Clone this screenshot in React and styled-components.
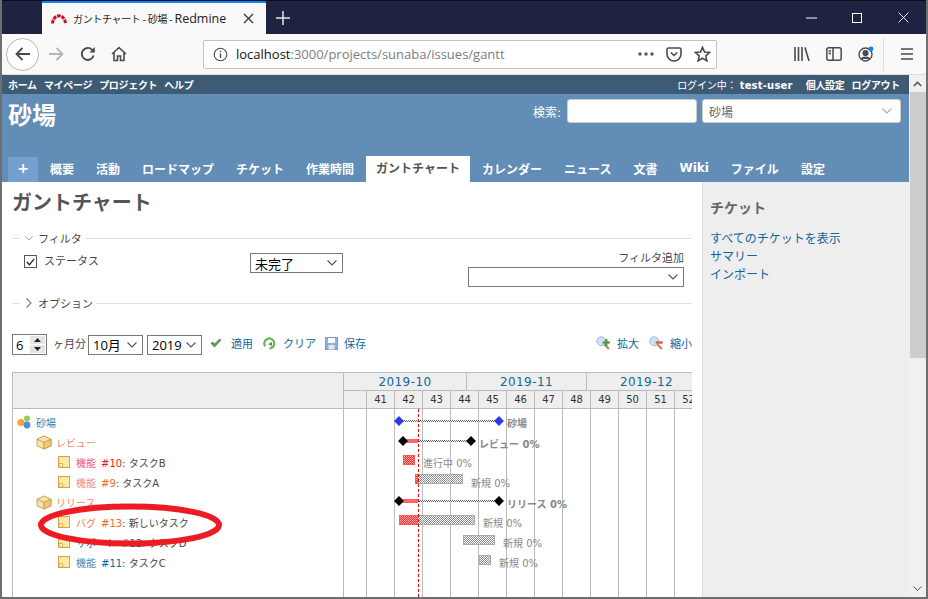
import styled, { createGlobalStyle } from "styled-components";

const GlobalStyle = createGlobalStyle`
  html, body {
    margin: 0;
    padding: 0;
    overflow: hidden;
    background: #fff;
  }
  * {
    box-sizing: border-box;
  }
  svg {
    flex: none;
  }
`;

const pageFont = `"DejaVu Sans", "Noto Sans CJK JP", sans-serif`;
const uiFont = `"Open Sans", "Noto Sans CJK JP", sans-serif`;

const Window = styled.div`
  position: relative;
  width: 928px;
  height: 599px;
  display: flex;
  flex-direction: column;
  overflow: hidden;
  border-left: 2px solid #6f6f6f;
  border-right: 2px solid #6f6f6f;
  border-bottom: 2px solid #6f6f6f;
  font-family: ${pageFont};
`;

/* browser chrome */
const TitleBar = styled.div`
  height: 34px;
  flex: none;
  display: flex;
  align-items: stretch;
  padding-left: 40px;
  background: #1f2342;
  border-top: 1px solid #0c0c14;
`;

const BrowserTab = styled.div`
  width: 224px;
  display: flex;
  align-items: center;
  gap: 6px;
  padding: 0 12px 0 9px;
  background: #f9f9fa;
  border-top: 2px solid #0a84ff;
  font: 10px ${uiFont};
  color: #1c1c1c;
`;

const TabTitle = styled.span`
  flex: 1;
  white-space: nowrap;
  letter-spacing: -0.35px;
  b {
    font-weight: 400;
    font-size: 12.5px;
    letter-spacing: 0;
  }
`;

const NewTab = styled.div`
  width: 34px;
  display: flex;
  align-items: center;
  justify-content: center;
`;

const WindowControls = styled.div`
  margin-left: auto;
  display: flex;
  align-items: center;
`;

const WindowButton = styled.div`
  width: 46px;
  display: flex;
  justify-content: center;
`;

const Toolbar = styled.div`
  height: 41px;
  flex: none;
  display: flex;
  align-items: center;
  background: #f9f9fa;
  border-bottom: 1px solid #dcdcdc;
`;

const ToolButton = styled.div`
  width: ${(props) => props.$w || 32}px;
  height: 32px;
  margin-left: ${(props) => props.$left || 0}px;
  flex: none;
  display: flex;
  align-items: center;
  justify-content: center;
`;

const BackButton = styled.div`
  width: 33px;
  height: 33px;
  margin: 0 1px 0 4px;
  flex: none;
  display: flex;
  align-items: center;
  justify-content: center;
  background: #fff;
  border: 1px solid #b5b5b5;
  border-radius: 50%;
`;

const UrlBar = styled.div`
  width: 514px;
  height: 29px;
  margin-left: 68px;
  display: flex;
  align-items: center;
  padding: 0 0 0 9px;
  background: #fff;
  border: 1px solid #c2c2c2;
  border-radius: 2px;
  flex: none;
  font: 13px ${uiFont};
`;

const UrlText = styled.span`
  flex: 1;
  margin-left: 8px;
  color: #7d7d7d;
  white-space: nowrap;
  b {
    font-weight: 400;
    color: #111;
  }
`;

const ToolDivider = styled.div`
  width: 1px;
  height: 33px;
  background: #dedede;
  margin: 0 7px 0 1px;
`;

/* redmine page */
const Viewport = styled.div`
  flex: 1;
  min-height: 0;
  display: flex;
  overflow: hidden;
`;

const Page = styled.div`
  flex: 1;
  min-width: 0;
  display: flex;
  flex-direction: column;
`;

const TopMenu = styled.div`
  height: 19px;
  flex: none;
  display: flex;
  align-items: center;
  justify-content: space-between;
  padding: 0 9px 0 6px;
  background: #3e5b76;
  color: #fff;
  font-size: 10px;
`;

const MenuGroup = styled.div`
  display: flex;
  gap: 7px;
  align-items: center;
`;

const MenuLink = styled.span`
  font-weight: bold;
  white-space: nowrap;
  letter-spacing: -0.3px;
`;

const LoggedAs = styled.span`
  margin-right: 6px;
  white-space: nowrap;
  letter-spacing: -0.1px;
  b {
    font-size: 10px;
    letter-spacing: 0.2px;
  }
`;

const Header = styled.div`
  height: 88px;
  flex: none;
  display: flex;
  flex-direction: column;
  justify-content: space-between;
  background: #628db6;
  color: #fff;
`;

const HeaderTop = styled.div`
  display: flex;
  align-items: flex-start;
  justify-content: space-between;
  padding: 5px 8px 0 6px;
`;

const ProjectName = styled.h1`
  margin: 0;
  font-size: 24px;
  line-height: 34px;
  font-weight: bold;
`;

const SearchArea = styled.div`
  display: flex;
  align-items: center;
  font-size: 12px;
`;

const SearchInput = styled.input`
  width: 130px;
  height: 24px;
  margin: 0 5px 0 6px;
  background: #fff;
  border: 1px solid #ccc;
  border-radius: 3px;
`;

const JumpBox = styled.div`
  width: 199px;
  height: 24px;
  display: flex;
  align-items: center;
  justify-content: space-between;
  padding: 0 8px 0 6px;
  background: #fff;
  border: 1px solid #ccc;
  border-radius: 3px;
  color: #666;
`;

const TabBar = styled.div`
  display: flex;
  align-items: flex-end;
  gap: 2px;
  padding-left: 6px;
`;

const MainTab = styled.div`
  height: ${(props) => (props.$active ? 26 : 25)}px;
  padding: 0 10px 3px;
  display: flex;
  align-items: center;
  font-size: 12px;
  font-weight: bold;
  white-space: nowrap;
  background: ${(props) => (props.$active ? "#fff" : "transparent")};
  color: ${(props) => (props.$active ? "#555" : "#fff")};
`;

const NewObjectTab = styled(MainTab)`
  width: 30px;
  justify-content: center;
  background: #759fcf;
  font-size: 14px;
`;

const Main = styled.div`
  flex: 1;
  min-height: 0;
  display: flex;
`;

const Content = styled.div`
  width: 700px;
  flex: none;
  padding: 0 10px;
  background: #fff;
  color: #484848;
  font-size: 11px;
`;

const Sidebar = styled.div`
  flex: 1;
  padding: 15px 7px;
  background: #eee;
  border-left: 1px solid #ddd;
`;

const SidebarTitle = styled.h3`
  margin: 0 0 11px;
  font-size: 14px;
  line-height: 22px;
  color: #666;
  font-weight: bold;
`;

const SidebarLink = styled.div`
  font-size: 12px;
  line-height: 18px;
  color: #169;
`;

const Scrollbar = styled.div`
  width: 17px;
  flex: none;
  display: flex;
  flex-direction: column;
  background: #f0f0f0;
`;

const ScrollArrow = styled.div`
  height: 17px;
  flex: none;
  display: flex;
  align-items: center;
  justify-content: center;
`;

const ScrollTrack = styled.div`
  flex: 1;
`;

const ScrollThumb = styled.div`
  height: 266px;
  margin-left: 1px;
  background: #cdcdcd;
`;

const PageTitle = styled.h2`
  margin: 0;
  height: 42px;
  font-size: 20px;
  line-height: 42px;
  font-weight: bold;
  color: #555;
`;

const Legend = styled.div`
  height: 20px;
  display: flex;
  align-items: center;
  gap: 5px;
  margin-top: ${(props) => props.$top || 0}px;
  font-size: 11px;
  white-space: nowrap;
  &::before {
    content: "";
    width: 8px;
    height: 1px;
    background: #e0e0e0;
  }
  &::after {
    content: "";
    flex: 1;
    height: 1px;
    background: #e0e0e0;
    margin-left: -2px;
  }
`;

const FilterBody = styled.div`
  height: 45px;
  display: grid;
  grid-template-columns: 226px 1fr 216px;
  padding: 5px 8px 0 12px;
`;

const StatusField = styled.div`
  display: flex;
  gap: 7px;
  margin-top: -1px;
`;

const CheckBox = styled.div`
  width: 13px;
  height: 13px;
  margin-top: 3px;
  display: flex;
  align-items: center;
  justify-content: center;
  background: #fff;
  border: 1px solid #555;
`;

const SelectBox = styled.div`
  width: ${(props) => props.$w}px;
  height: 20px;
  margin-top: ${(props) => props.$top || 0}px;
  margin-left: ${(props) => props.$left || 0}px;
  flex: none;
  display: flex;
  align-items: center;
  justify-content: space-between;
  padding: 0 5px 0 4px;
  background: #fff;
  border: 1px solid #767676;
  color: #000;
  font: 13px ${uiFont};
`;

const AddFilter = styled.div`
  display: flex;
  flex-direction: column;
  align-items: flex-end;
  margin-top: -2px;
  line-height: 15px;
`;

const Controls = styled.div`
  height: 21px;
  margin-top: 21px;
  display: flex;
  align-items: center;
`;

const MonthSpinner = styled.div`
  width: 35px;
  height: 21px;
  display: flex;
  align-items: center;
  justify-content: space-between;
  padding: 1px 1px 1px 3px;
  border: 1px solid #767676;
  font: 13px ${uiFont};
  color: #000;
`;

const SpinButtons = styled.div`
  width: 15px;
  height: 17px;
  display: flex;
  flex-direction: column;
  gap: 1px;
`;

const SpinPart = styled.div`
  flex: 1;
  display: flex;
  align-items: center;
  justify-content: center;
  background: #e4e4e4;
`;

const ControlLabel = styled.span`
  margin: 0 2px 3px 6px;
  white-space: nowrap;
`;

const ActionLink = styled.span`
  display: flex;
  align-items: center;
  gap: ${(props) => props.$gap || 7}px;
  margin-left: ${(props) => props.$left || 0}px;
  padding-bottom: 3px;
  color: #169;
  white-space: nowrap;
`;

const Spacer = styled.div`
  flex: 1;
`;

const GanttTable = styled.div`
  margin-top: 17px;
  display: flex;
  height: 300px;
`;

const SubjectColumn = styled.div`
  width: 331px;
  flex: none;
  border-top: 1px solid #bbb;
  border-left: 1px solid #bbb;
`;

const SubjectHead = styled.div`
  height: 36px;
  background: #eee;
  border-bottom: 1px solid #bbb;
`;

const SubjectList = styled.div`
  padding-top: 3px;
`;

const SubjectRow = styled.div`
  height: 20px;
  display: flex;
  align-items: center;
  gap: ${(props) => (props.$depth === 2 ? 6 : 4)}px;
  padding-left: ${(props) => [4, 23, 45][props.$depth]}px;
  font-size: 10px;
  white-space: nowrap;
  color: #484848;
`;

const SubjectLink = styled.span`
  color: ${(props) => props.$color};
`;

const IssueNumber = styled.span`
  margin-left: 5px;
  color: ${(props) => props.$color};
`;

const ChartColumn = styled.div`
  width: 349px;
  flex: none;
  overflow: hidden;
  border-top: 1px solid #bbb;
  border-left: 1px solid #bbb;
`;

const MonthRow = styled.div`
  height: 18px;
  display: flex;
  background: #eee;
  border-bottom: 1px solid #bbb;
`;

const MonthCell = styled.div`
  width: ${(props) => props.$w}px;
  flex: none;
  display: flex;
  align-items: center;
  justify-content: center;
  font-size: 12px;
  letter-spacing: 0.4px;
  color: #169;
  border-right: 1px solid #bbb;
`;

const WeekRow = styled.div`
  height: 18px;
  width: 400px;
  display: flex;
  background: #eee;
  border-bottom: 1px solid #bbb;
`;

const WeekCell = styled.div`
  width: ${(props) => props.$w}px;
  flex: none;
  padding-top: 1px;
  text-align: center;
  font-size: 10px;
  line-height: 16px;
  color: #333;
  border-right: 1px solid #bbb;
`;

const Canvas = styled.div`
  position: relative;
  width: 400px;
  height: 200px;
  display: flex;
`;

const GridLine = styled.div`
  width: ${(props) => props.$w}px;
  flex: none;
  border-right: 1px solid #bbb;
`;

const TodayLine = styled.div`
  position: absolute;
  top: 0;
  bottom: 0;
  left: 74px;
  width: 1px;
  background: repeating-linear-gradient(#f00 0 3px, transparent 3px 5px);
`;

const BarTrack = styled.div`
  position: absolute;
  height: 10px;
  border: 1px solid #aaa;
  background: repeating-conic-gradient(#8c8c8c 0 25%, #fff 0 50%) 0 0 / 2px 2px;
`;

const BarDone = styled.div`
  position: absolute;
  top: -1px;
  bottom: -1px;
  left: -1px;
  z-index: 1;
  border: 1px solid #f55;
  background: repeating-conic-gradient(#f22 0 25%, #ffb4b4 0 50%) 0 0 / 2px 2px;
`;

const MilestoneLine = styled.div`
  position: absolute;
  height: 2px;
  background: repeating-conic-gradient(#666 0 25%, #fff 0 50%) 0 0 / 2px 2px;
`;

const MilestoneDone = styled.div`
  position: absolute;
  top: -1px;
  height: 4px;
  left: 0;
  background: #f66;
`;

const Diamond = styled.div`
  position: absolute;
  width: 7px;
  height: 7px;
  transform: translate(-50%, -50%) rotate(45deg);
  background: ${(props) => props.$color};
`;

const BarLabel = styled.span`
  position: absolute;
  font-size: 10px;
  line-height: 14px;
  white-space: nowrap;
  color: #888;
  font-weight: ${(props) => (props.$bold ? "bold" : "normal")};
`;

const CircleMark = styled.svg`
  position: absolute;
  left: 34px;
  top: 502px;
`;

function ChevronDown({ size = 10, color = "#555" }) {
  return (
    <svg width={size} height={size * 0.6} viewBox="0 0 10 6" fill="none" stroke={color} strokeWidth="1.1">
      <path d="M0.5 0.5 5 5 9.5 0.5" />
    </svg>
  );
}

function Favicon() {
  return (
    <svg width="16" height="10" viewBox="0 0 16 10" fill="none" stroke="#c4161c" strokeWidth="3">
      <path d="M1.5 9.5C1.8 5 4.5 2 8 1.8c3.5.2 6.2 3.2 6.5 7.7" strokeDasharray="3.6 .9" />
    </svg>
  );
}

function ProjectIcon() {
  return (
    <svg width="15" height="14" viewBox="0 0 15 14">
      <circle cx="10" cy="3.5" r="3" fill="#8fd14f" />
      <circle cx="4" cy="7.5" r="3.6" fill="#f5a33b" />
      <circle cx="10" cy="10" r="3.4" fill="#4a8fe0" />
    </svg>
  );
}

function PackageIcon() {
  return (
    <svg width="16" height="15" viewBox="0 0 16 15" stroke="#c9a35c" strokeWidth="1">
      <path d="M8 1 15 4.2v6.6L8 14 1 10.8V4.2Z" fill="#f9e2ad" />
      <path d="M1 4.2 8 7.4 15 4.2M8 7.4V14" fill="none" />
      <path d="M8 7.4 15 4.2v6.6L8 14Z" fill="#f0c873" />
    </svg>
  );
}

function IssueIcon() {
  return (
    <svg width="12" height="12" viewBox="0 0 12 12">
      <rect x=".5" y=".5" width="11" height="11" fill="#fbe9a8" stroke="#e0a040" />
      <path d="M1 11V7.5h3.5V11Z" fill="#fff6d8" stroke="#e0a040" strokeWidth=".8" />
    </svg>
  );
}

function ApplyIcon() {
  return (
    <svg width="12" height="10" viewBox="0 0 12 10">
      <path d="M.5 5.5 2.8 3.6 4.6 5.6 9.6.4 11.5 2 4.6 9.5Z" fill="#5c9b57" />
    </svg>
  );
}

function ClearIcon() {
  return (
    <svg width="13" height="13" viewBox="0 0 13 13" fill="none">
      <path d="M2.2 9.4A5 5 0 1 1 6.5 11.5" stroke="#6cb35a" strokeWidth="2.2" />
      <path d="M5 7.2 8.8 4.8 9.2 9Z" fill="#4f9a48" />
    </svg>
  );
}

function SaveIcon() {
  return (
    <svg width="13" height="13" viewBox="0 0 13 13">
      <rect x=".5" y=".5" width="12" height="12" fill="#8fb0dc" stroke="#7a9bc9" />
      <rect x="3" y="1" width="7" height="5" fill="#fff" />
      <rect x="3.5" y="8" width="6" height="4.5" fill="#dfe7f2" />
    </svg>
  );
}

function ZoomIcon({ sign }) {
  const fill = sign === "plus" ? "#4f9a48" : "#e0525a";
  return (
    <svg width="14" height="14" viewBox="0 0 14 14">
      <path d="M8 8 13 13" stroke="#b98a56" strokeWidth="2.2" />
      <circle cx="5.2" cy="5.2" r="4.4" fill="#cfe0f5" stroke="#9db9dc" />
      {sign === "plus" && <rect x="9" y="3" width="2.4" height="7" fill={fill} />}
      <rect x="6.7" y="5.3" width="7" height="2.4" fill={fill} />
    </svg>
  );
}

const months = [
  { label: "2019-10", w: 123 },
  { label: "2019-11", w: 120 },
  { label: "2019-12", w: 120 },
];

// first cell is the tail of week 40
const weeks = ["", "41", "42", "43", "44", "45", "46", "47", "48", "49", "50", "51", "52"];

const TODAY = 74;

const tasks = [
  { left: 59, top: 46, width: 12, label: "進行中 0%", labelX: 79, labelY: 48 },
  { left: 71, top: 65, width: 48, label: "新規 0%", labelX: 127, labelY: 68 },
  { left: 55, top: 106, width: 76, label: "新規 0%", labelX: 139, labelY: 108 },
  { left: 119, top: 126, width: 32, label: "新規 0%", labelX: 159, labelY: 128 },
  { left: 135, top: 146, width: 12, label: "新規 0%", labelX: 155, labelY: 148 },
];

const milestones = [
  { from: 55, to: 155, y: 12, color: "#2d3be8", label: "砂場", labelX: 163, labelY: 8, done: false },
  { from: 59, to: 127, y: 32, color: "#000", label: "レビュー 0%", labelX: 135, labelY: 29, done: true },
  { from: 55, to: 155, y: 92, color: "#000", label: "リリース 0%", labelX: 163, labelY: 89, done: true },
];

const subjects = [
  { depth: 2, tracker: "機能", trackerColor: "#f4566f", number: "#10", numberColor: "#f01818", title: "タスクB" },
  { depth: 2, tracker: "機能", trackerColor: "#f58a7a", number: "#9", numberColor: "#f56a1a", title: "タスクA" },
];

const lateSubjects = [
  { depth: 2, tracker: "バグ", trackerColor: "#f5803f", number: "#13", numberColor: "#f56a1a", title: "新しいタスク" },
  { depth: 2, tracker: "サポート", trackerColor: "#169", number: "#12", numberColor: "#169", title: "タスクD" },
  { depth: 2, tracker: "機能", trackerColor: "#4f86b0", number: "#11", numberColor: "#169", title: "タスクC" },
];

function IssueRow({ issue }) {
  return (
    <SubjectRow $depth={issue.depth}>
      <IssueIcon />
      <span>
        <SubjectLink $color={issue.trackerColor}>{issue.tracker}</SubjectLink>
        <IssueNumber $color={issue.numberColor}>{issue.number}</IssueNumber>: {issue.title}
      </span>
    </SubjectRow>
  );
}

function BrowserChrome() {
  return (
    <>
      <TitleBar>
        <BrowserTab>
          <Favicon />
          <TabTitle>ガントチャート - 砂場 - <b>Redmine</b></TabTitle>
          <svg width="11" height="11" viewBox="0 0 11 11" stroke="#3a3a3a" strokeWidth="1.4">
            <path d="M1 1 10 10M10 1 1 10" />
          </svg>
        </BrowserTab>
        <NewTab>
          <svg width="14" height="14" viewBox="0 0 14 14" stroke="#e6e6ea" strokeWidth="1.5">
            <path d="M7 0V14M0 7H14" />
          </svg>
        </NewTab>
        <WindowControls>
          <WindowButton>
            <svg width="11" height="2" viewBox="0 0 11 2" stroke="#fff"><path d="M0 1H11" /></svg>
          </WindowButton>
          <WindowButton>
            <svg width="10" height="10" viewBox="0 0 10 10" stroke="#fff" fill="none"><rect x=".5" y=".5" width="9" height="9" /></svg>
          </WindowButton>
          <WindowButton>
            <svg width="11" height="11" viewBox="0 0 11 11" stroke="#fff" strokeWidth=".9"><path d="M.5.5 10.5 10.5M10.5.5 .5 10.5" /></svg>
          </WindowButton>
        </WindowControls>
      </TitleBar>
      <Toolbar>
        <BackButton>
          <svg width="16" height="14" viewBox="0 0 16 14" fill="none" stroke="#4a4a4f" strokeWidth="1.8">
            <path d="M15 7H2M7.5 1 1.5 7l6 6" />
          </svg>
        </BackButton>
        <ToolButton $w={32}>
          <svg width="16" height="14" viewBox="0 0 16 14" fill="none" stroke="#b4b4b6" strokeWidth="1.8">
            <path d="M1 7H14M8.5 1l6 6-6 6" />
          </svg>
        </ToolButton>
        <ToolButton $w={31}>
          <svg width="16" height="16" viewBox="0 0 16 16" fill="none" stroke="#4a4a4f" strokeWidth="1.9">
            <path d="M13.6 9.5A6 6 0 1 1 12 3.6L14 5.5" />
            <path d="M14.8 1v5.4H9.4" fill="#4a4a4f" stroke="none" />
          </svg>
        </ToolButton>
        <ToolButton $w={32}>
          <svg width="16" height="16" viewBox="0 0 16 16" fill="none" stroke="#4a4a4f" strokeWidth="1.6">
            <path d="M1 8 8 1.5 15 8M3 6.5V14.5H6.5V10h3v4.5H13V6.5" />
          </svg>
        </ToolButton>
        <UrlBar>
          <svg width="15" height="15" viewBox="0 0 15 15" fill="none" stroke="#4a4a4f" strokeWidth="1.1">
            <circle cx="7.5" cy="7.5" r="6.3" />
            <path d="M7.5 6.6V11M7.5 3.8V5.2" strokeWidth="1.4" />
          </svg>
          <UrlText><b>localhost</b>:3000/projects/sunaba/issues/gantt</UrlText>
          <ToolButton $w={28}>
            <svg width="16" height="4" viewBox="0 0 16 4" fill="#555"><circle cx="2" cy="2" r="1.7" /><circle cx="8" cy="2" r="1.7" /><circle cx="14" cy="2" r="1.7" /></svg>
          </ToolButton>
          <ToolButton $w={28}>
            <svg width="16" height="15" viewBox="0 0 16 15" fill="none" stroke="#4a4a4f" strokeWidth="1.6">
              <path d="M1 2.5Q1 1 2.5 1h11Q15 1 15 2.5V7A7 7 0 0 1 1 7Z" />
              <path d="M4.8 5.5 8 8.5l3.2-3" />
            </svg>
          </ToolButton>
          <ToolButton $w={28}>
            <svg width="17" height="16" viewBox="0 0 17 16" fill="none" stroke="#4a4a4f" strokeWidth="1.6">
              <path d="M8.5 1.3 10.6 6l5 .5-3.8 3.3 1.1 5-4.4-2.6-4.4 2.6 1.1-5L1.4 6.5l5-.5Z" />
            </svg>
          </ToolButton>
        </UrlBar>
        <ToolButton $w={32} $left={69}>
          <svg width="16" height="14" viewBox="0 0 16 14" fill="none" stroke="#4a4a4f" strokeWidth="1.6">
            <path d="M1 0V14M4.5 0V14M8 0V14M11 .5 15 14" />
          </svg>
        </ToolButton>
        <ToolButton $w={32}>
          <svg width="16" height="14" viewBox="0 0 16 14" fill="none" stroke="#4a4a4f" strokeWidth="1.5">
            <rect x=".8" y=".8" width="14.4" height="12.4" rx="2" />
            <path d="M7 1V13M2.5 4H5M2.5 6.5H5" />
          </svg>
        </ToolButton>
        <ToolButton $w={32}>
          <svg width="16" height="16" viewBox="0 0 16 16" fill="none" stroke="#4a4a4f" strokeWidth="1.4">
            <circle cx="7.5" cy="8.5" r="6.5" />
            <circle cx="7.5" cy="7" r="2.4" fill="#4a4a4f" />
            <path d="M3.5 13c1-2.5 7-2.5 8 0" fill="#4a4a4f" />
            <circle cx="13" cy="3" r="2.4" fill="#0a84ff" stroke="none" />
          </svg>
        </ToolButton>
        <ToolDivider />
        <ToolButton $w={32}>
          <svg width="14" height="12" viewBox="0 0 14 12" stroke="#4a4a4f" strokeWidth="1.6">
            <path d="M1 1H13M1 6H13M1 11H13" />
          </svg>
        </ToolButton>
      </Toolbar>
    </>
  );
}

function GanttChart() {
  return (
    <ChartColumn>
      <MonthRow>
        {months.map((month) => (
          <MonthCell key={month.label} $w={month.w}>{month.label}</MonthCell>
        ))}
      </MonthRow>
      <WeekRow>
        {weeks.map((week, i) => (
          <WeekCell key={i} $w={i === 0 ? 23 : 28}>{week}</WeekCell>
        ))}
      </WeekRow>
      <Canvas>
        {weeks.map((week, i) => (
          <GridLine key={i} $w={i === 0 ? 23 : 28} />
        ))}
        {milestones.map((m) => (
          <div key={m.label}>
            <MilestoneLine style={{ left: m.from, top: m.y - 1, width: m.to - m.from }}>
              {m.done && <MilestoneDone style={{ width: TODAY - m.from }} />}
            </MilestoneLine>
            <Diamond $color={m.color} style={{ left: m.from, top: m.y }} />
            <Diamond $color={m.color} style={{ left: m.to, top: m.y }} />
            <BarLabel $bold style={{ left: m.labelX, top: m.labelY }}>{m.label}</BarLabel>
          </div>
        ))}
        {tasks.map((t) => (
          <div key={t.left}>
            <BarTrack style={{ left: t.left, top: t.top, width: t.width }}>
              {t.left < TODAY && <BarDone style={{ width: Math.min(TODAY - t.left, t.width) }} />}
            </BarTrack>
            <BarLabel style={{ left: t.labelX, top: t.labelY }}>{t.label}</BarLabel>
          </div>
        ))}
        <TodayLine />
      </Canvas>
    </ChartColumn>
  );
}

export default function App() {
  return (
    <>
      <GlobalStyle />
      <Window>
        <BrowserChrome />
        <Viewport>
          <Page>
            <TopMenu>
              <MenuGroup>
                <MenuLink>ホーム</MenuLink>
                <MenuLink>マイページ</MenuLink>
                <MenuLink>プロジェクト</MenuLink>
                <MenuLink>ヘルプ</MenuLink>
              </MenuGroup>
              <MenuGroup>
                <LoggedAs>ログイン中： <b>test-user</b></LoggedAs>
                <MenuLink>個人設定</MenuLink>
                <MenuLink>ログアウト</MenuLink>
              </MenuGroup>
            </TopMenu>
            <Header>
              <HeaderTop>
                <ProjectName>砂場</ProjectName>
                <SearchArea>
                  検索:
                  <SearchInput />
                  <JumpBox>
                    砂場
                    <ChevronDown color="#aaa" />
                  </JumpBox>
                </SearchArea>
              </HeaderTop>
              <TabBar>
                <NewObjectTab>+</NewObjectTab>
                <MainTab>概要</MainTab>
                <MainTab>活動</MainTab>
                <MainTab>ロードマップ</MainTab>
                <MainTab>チケット</MainTab>
                <MainTab>作業時間</MainTab>
                <MainTab $active>ガントチャート</MainTab>
                <MainTab>カレンダー</MainTab>
                <MainTab>ニュース</MainTab>
                <MainTab>文書</MainTab>
                <MainTab>Wiki</MainTab>
                <MainTab>ファイル</MainTab>
                <MainTab>設定</MainTab>
              </TabBar>
            </Header>
            <Main>
              <Content>
                <PageTitle>ガントチャート</PageTitle>
                <Legend $top={4}>
                  <ChevronDown size={8} color="#999" />
                  フィルタ
                </Legend>
                <FilterBody>
                  <StatusField>
                    <CheckBox>
                      <svg width="9" height="8" viewBox="0 0 9 8" fill="none" stroke="#222" strokeWidth="1.3">
                        <path d="M.8 4 3.4 6.8 8.2.8" />
                      </svg>
                    </CheckBox>
                    ステータス
                  </StatusField>
                  <SelectBox $w={93}>
                    未完了
                    <ChevronDown />
                  </SelectBox>
                  <AddFilter>
                    フィルタ追加
                    <SelectBox $w={216} $top={1}>
                      <span />
                      <ChevronDown />
                    </SelectBox>
                  </AddFilter>
                </FilterBody>
                <Legend>
                  <svg width="8" height="10" viewBox="0 0 8 10" fill="none" stroke="#777" strokeWidth="1.1">
                    <path d="M1.5.5 6 5 1.5 9.5" />
                  </svg>
                  オプション
                </Legend>
                <Controls>
                  <MonthSpinner>
                    6
                    <SpinButtons>
                      <SpinPart>
                        <svg width="7" height="4" viewBox="0 0 7 4" fill="#222"><path d="M3.5 0 7 4H0Z" /></svg>
                      </SpinPart>
                      <SpinPart>
                        <svg width="7" height="4" viewBox="0 0 7 4" fill="#222"><path d="M0 0H7L3.5 4Z" /></svg>
                      </SpinPart>
                    </SpinButtons>
                  </MonthSpinner>
                  <ControlLabel>ヶ月分</ControlLabel>
                  <SelectBox $w={55}>
                    10月
                    <ChevronDown />
                  </SelectBox>
                  <SelectBox $w={55} $left={4}>
                    2019
                    <ChevronDown />
                  </SelectBox>
                  <ActionLink $left={8} $gap={9}><ApplyIcon />適用</ActionLink>
                  <ActionLink $left={10}><ClearIcon />クリア</ActionLink>
                  <ActionLink $left={9} $gap={6}><SaveIcon />保存</ActionLink>
                  <Spacer />
                  <ActionLink><ZoomIcon sign="plus" />拡大</ActionLink>
                  <ActionLink $left={10}><ZoomIcon sign="minus" />縮小</ActionLink>
                </Controls>
                <GanttTable>
                  <SubjectColumn>
                    <SubjectHead />
                    <SubjectList>
                      <SubjectRow $depth={0}>
                        <ProjectIcon />
                        <SubjectLink $color="#3a7eb0">砂場</SubjectLink>
                      </SubjectRow>
                      <SubjectRow $depth={1}>
                        <PackageIcon />
                        <SubjectLink $color="#f58a6a">レビュー</SubjectLink>
                      </SubjectRow>
                      {subjects.map((issue) => <IssueRow key={issue.number} issue={issue} />)}
                      <SubjectRow $depth={1}>
                        <PackageIcon />
                        <SubjectLink $color="#f58a6a">リリース</SubjectLink>
                      </SubjectRow>
                      {lateSubjects.map((issue) => <IssueRow key={issue.number} issue={issue} />)}
                    </SubjectList>
                  </SubjectColumn>
                  <GanttChart />
                </GanttTable>
              </Content>
              <Sidebar>
                <SidebarTitle>チケット</SidebarTitle>
                <SidebarLink>すべてのチケットを表示</SidebarLink>
                <SidebarLink>サマリー</SidebarLink>
                <SidebarLink>インポート</SidebarLink>
              </Sidebar>
            </Main>
          </Page>
          <Scrollbar>
            <ScrollArrow>
              <svg width="9" height="6" viewBox="0 0 9 6" fill="none" stroke="#505050" strokeWidth="1.6"><path d="M.8 5 4.5 1.3 8.2 5" /></svg>
            </ScrollArrow>
            <ScrollTrack>
              <ScrollThumb />
            </ScrollTrack>
            <ScrollArrow>
              <ChevronDown size={9} color="#505050" />
            </ScrollArrow>
          </Scrollbar>
        </Viewport>
        <CircleMark width="188" height="46" viewBox="0 0 188 46" fill="none">
          <ellipse cx="94" cy="23" rx="89" ry="18.5" stroke="#ed1c24" strokeWidth="6" />
        </CircleMark>
      </Window>
    </>
  );
}
